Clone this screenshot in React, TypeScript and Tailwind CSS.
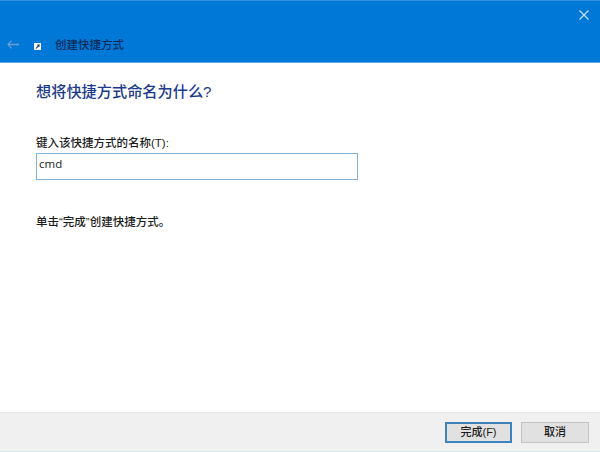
const font = "font-['Liberation_Sans','Noto_Sans_CJK_SC',sans-serif]"

export default function App() {
  return (
    <div className={`flex h-[452px] w-[600px] flex-col overflow-hidden bg-white ${font}`}>
      {/* title bar */}
      <div className="flex h-[63px] shrink-0 flex-col border-t border-b border-t-[#2f8fe3] border-b-[#5caaea] bg-[#0078d7]">
        <div className="flex h-[14px] justify-end pr-[11px] pt-[9px]">
          <svg width="10" height="10" viewBox="0 0 10 10" className="shrink-0">
            <path d="M.5 .5 L9.5 9.5 M9.5 .5 L.5 9.5" stroke="#c4e0f8" strokeWidth="1.2" fill="none" />
          </svg>
        </div>
        <div className="mt-[21px] flex items-center pl-[7px]">
          <svg width="12" height="9" viewBox="0 0 12 9" className="shrink-0">
            <path d="M4.5 .6 1 4.5 4.5 8.4 M1 4.5 H12" stroke="#6a9fd0" strokeWidth="1.3" fill="none" />
          </svg>
          <svg width="7" height="7" viewBox="0 0 7 7" className="ml-[15px] mt-[5px] shrink-0">
            <rect width="7" height="7" fill="#f4f7fb" />
            <path d="M2 5.5 L4.8 2.4 M3.2 2 H5 V3.8" stroke="#1c2f50" strokeWidth="1.1" fill="none" />
          </svg>
          <span className="ml-[14px] mt-[2px] text-[11.5px] leading-[14px] font-medium text-[#0c2a58]">创建快捷方式</span>
        </div>
      </div>

      {/* body */}
      <div className="flex flex-1 flex-col pl-[36px]">
        <h1 className="mt-[19px] text-[15.2px] leading-[20px] font-medium text-[#1b3a8c]">想将快捷方式命名为什么?</h1>
        <label className="mt-[33px] text-[11.5px] leading-[16px] font-medium text-[#1c1c1c]">键入该快捷方式的名称(T):</label>
        <div className="mt-[2px] flex h-[27px] w-[322px] items-center border border-[#7fb4dc] bg-white pb-[5px] pl-[2px] font-['Open_Sans',sans-serif] text-[11.5px] text-[#1c1c1c]">
          cmd
        </div>
        <p className="mt-[34px] text-[11.5px] leading-[16px] font-medium text-[#1c1c1c]">单击“完成”创建快捷方式。</p>
      </div>

      {/* footer */}
      <div className="flex h-[40px] shrink-0 items-start justify-end gap-[9px] border-t border-b border-t-[#e6e6e6] border-b-[#cfe6ea] bg-[#f0f0f0] pr-[11px] pt-[9px]">
        <button className="flex h-[21px] w-[67px] items-center justify-center border-2 border-[#3f83bd] bg-[#e1e1e1] text-[11px] font-medium text-[#1c1c1c]">完成(F)</button>
        <button className="flex h-[21px] w-[68px] items-center justify-center border border-[#c4c4c4] bg-[#e1e1e1] text-[11px] font-medium text-[#1c1c1c]">取消</button>
      </div>
    </div>
  )
}
